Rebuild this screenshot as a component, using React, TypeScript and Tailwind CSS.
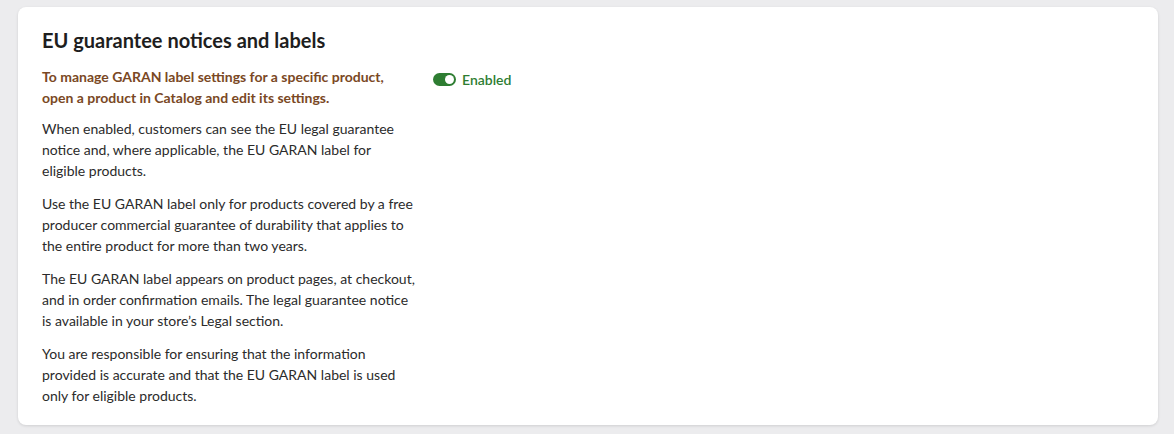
import React, { useState } from 'react';

const paragraphs = [
  'When enabled, customers can see the EU legal guarantee notice and, where applicable, the EU GARAN label for eligible products.',
  'Use the EU GARAN label only for products covered by a free producer commercial guarantee of durability that applies to the entire product for more than two years.',
  'The EU GARAN label appears on product pages, at checkout, and in order confirmation emails. The legal guarantee notice is available in your store\u2019s Legal section.',
  'You are responsible for ensuring that the information provided is accurate and that the EU GARAN label is used only for eligible products.',
];

const App: React.FC = () => {
  const [enabled, setEnabled] = useState(true);

  return (
    <div className="min-h-screen bg-[#ececee] pt-[7px] pl-[18px] pr-[16px] font-['Lato','Noto_Sans',sans-serif]">
      <div className="bg-white rounded-[8px] shadow-[0_1px_3px_rgba(0,0,0,0.12)] pl-6 pr-6 pt-[19px] pb-[19px]">
        <h2 className="text-[20px] leading-[28px] font-bold text-[#1e1e1e]">EU guarantee notices and labels</h2>

        <div className="flex gap-[17px] mt-[12px]">
          {/* ── Description ── */}
          <div className="w-[374px] shrink-0 text-[14px] leading-[21px] text-[#2b2b2b]">
            <p className="font-bold text-[#7a4824]">
              To manage GARAN label settings for a specific product, open a product in Catalog and edit its settings.
            </p>
            {paragraphs.map((text, i) => (
              <p key={i} className={i === 0 ? 'mt-[10px]' : 'mt-[12px]'}>
                {text}
              </p>
            ))}
          </div>

          {/* ── Toggle ── */}
          <div className="pt-[3px]">
            <button
              onClick={() => setEnabled(!enabled)}
              className="flex items-center gap-[6px] h-[21px] cursor-pointer"
            >
              <span
                className={
                  'relative w-[23px] h-[13px] rounded-full ' + (enabled ? 'bg-[#2e7d32]' : 'bg-gray-400')
                }
              >
                <span
                  className={
                    'absolute top-[2px] w-[9px] h-[9px] rounded-full bg-white ' +
                    (enabled ? 'left-[12px]' : 'left-[2px]')
                  }
                />
              </span>
              <span className="text-[14px] font-semibold text-[#2e7d32]">{enabled ? 'Enabled' : 'Disabled'}</span>
            </button>
          </div>
        </div>
      </div>
    </div>
  );
};

export default App;
